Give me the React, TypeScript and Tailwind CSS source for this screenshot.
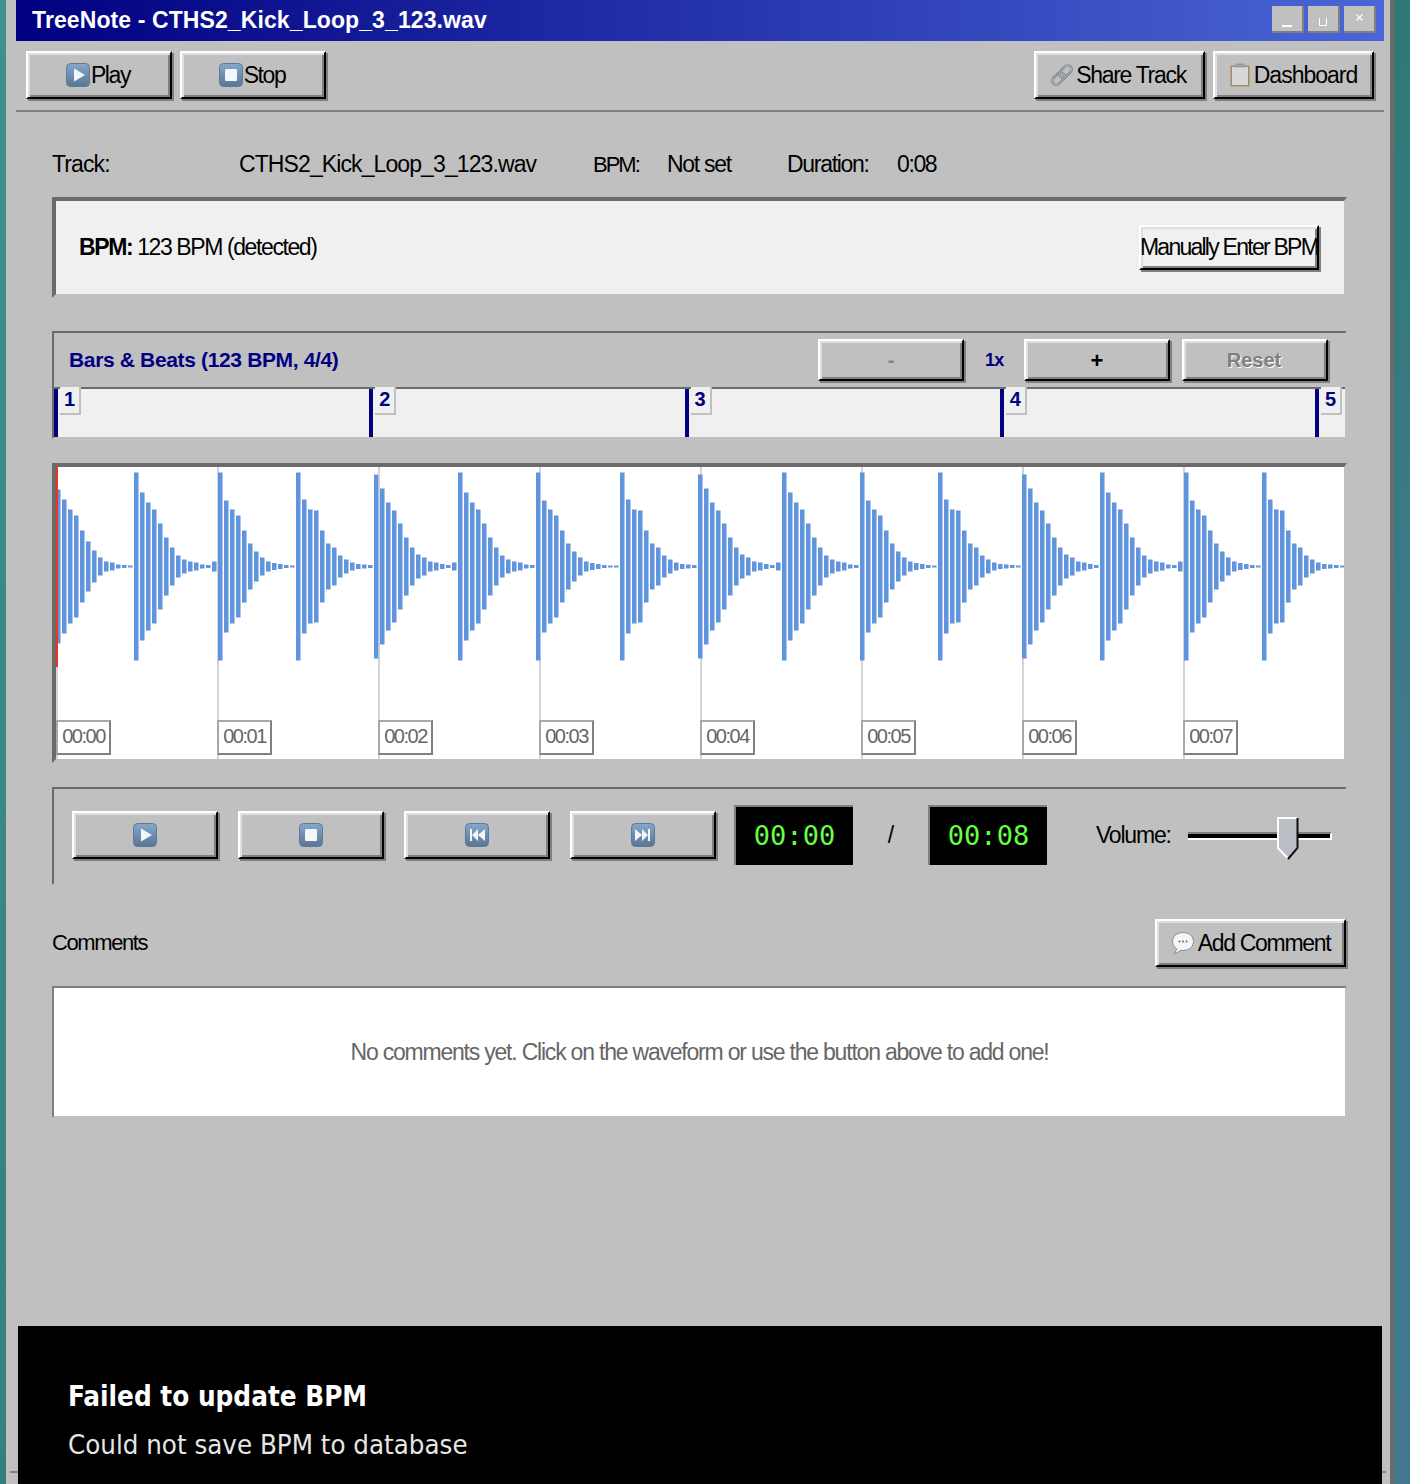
import React from "react";

const raised =
  "flex items-center justify-center border-2 border-t-white border-l-white border-r-black border-b-black bg-[#c0c0c0] shadow-[inset_2px_2px_0_#dfdfdf,inset_-2px_-2px_0_#808080,2px_2px_0_#808080]";
const ui = "font-['Liberation_Sans',Arial,sans-serif] text-[23px] tracking-[-0.9px] text-black";
const tight = "font-['Liberation_Sans',Arial,sans-serif] text-[22px] tracking-[-1.3px] text-black";

type IconKind = "play" | "stop" | "prev" | "next";

function MediaIcon({ kind, id }: { kind: IconKind; id: string }) {
  return (
    <svg width="24" height="24" viewBox="0 0 24 24" className="shrink-0">
      <defs>
        <linearGradient id={id} x1="0" y1="0" x2="0" y2="1">
          <stop offset="0" stopColor="#86a8cc" />
          <stop offset="1" stopColor="#587594" />
        </linearGradient>
      </defs>
      <rect x="0.5" y="0.5" width="23" height="23" rx="4" fill={`url(#${id})`} stroke="#5f7a96" />
      {kind === "play" && <path d="M8 5.5 L19 12 L8 18.5 Z" fill="#f2f6fb" />}
      {kind === "stop" && <rect x="6" y="6" width="12" height="12" rx="1" fill="#f2f6fb" />}
      {kind === "prev" && <path d="M5 6h2v12H5z M13 6v12l-6-6z M20 6v12l-7-6z" fill="#f2f6fb" />}
      {kind === "next" && <path d="M17 6h2v12h-2z M11 6v12l6-6z M4 6v12l7-6z" fill="#f2f6fb" />}
    </svg>
  );
}

function LinkIcon() {
  return (
    <svg width="24" height="24" viewBox="0 0 24 24" className="shrink-0" fill="none">
      <g transform="rotate(-45 12 12)">
        <rect x="0" y="8" width="14" height="8" rx="4" stroke="#6f7a85" strokeWidth="2.4" />
        <rect x="0" y="8" width="14" height="8" rx="4" stroke="#cfd4d9" strokeWidth="0.8" />
        <rect x="10" y="8" width="14" height="8" rx="4" stroke="#6f7a85" strokeWidth="2.4" />
        <rect x="10" y="8" width="14" height="8" rx="4" stroke="#cfd4d9" strokeWidth="0.8" />
      </g>
    </svg>
  );
}

function ClipboardIcon() {
  return (
    <svg width="20" height="24" viewBox="0 0 20 24" className="shrink-0">
      <rect x="0.5" y="2.5" width="19" height="21" rx="1" fill="#a98a60" />
      <rect x="2" y="4" width="16" height="18" fill="#d8d8d8" />
      <rect x="5" y="0.5" width="10" height="4" rx="1" fill="#9aa0a5" />
    </svg>
  );
}

function BubbleIcon() {
  return (
    <svg width="24" height="24" viewBox="0 0 24 24" className="shrink-0">
      <path d="M12 1.5C5.8 1.5 1.5 5.6 1.5 10.5c0 3.2 1.6 5.6 4.2 7.2L3.5 23l6.5-3.6c.7.1 1.3.1 2 .1 6.2 0 10.5-4 10.5-9S18.2 1.5 12 1.5z" fill="#f4f5f6" stroke="#888e94" />
      <circle cx="8.5" cy="10.5" r="1" fill="#666" />
      <circle cx="12" cy="10.5" r="1" fill="#666" />
      <circle cx="15.5" cy="10.5" r="1" fill="#666" />
    </svg>
  );
}

const patterns = [
  [77, 67, 57, 51, 36, 25, 16, 9, 5, 4, 2, 1.5, 1],
  [94, 74, 64, 57, 43, 29, 19, 11, 7, 5, 4, 2, 1.5, 5],
  [94, 66, 57, 51, 36, 23, 15, 9, 5, 3.5, 2.5, 1.5, 1],
  [94, 67, 57, 56, 36, 23, 19, 11, 7, 4, 2.5, 2, 1.5],
  [92, 78, 64, 56, 43, 29, 19, 12, 9, 5, 4, 2.5, 1.5, 4],
];
const starts = [0, 13, 27, 40, 53, 67, 80, 94, 107, 121, 134, 147, 161, 174, 188, 201];

function amplitudes(): number[] {
  const out: number[] = [];
  starts.forEach((s, g) => {
    const next = g + 1 < starts.length ? starts[g + 1] : 215;
    const p = g === 0 ? patterns[0] : patterns[((g - 1) % 4) + 1];
    for (let i = 0; i < next - s; i++) out.push(p[i] ?? 1);
  });
  return out;
}

function Waveform() {
  return (
    <svg width="1288" height="210" viewBox="0 0 1288 210" className="absolute left-0 top-0">
      {amplitudes().map((a, i) => (
        <g key={i}>
          <rect x={i * 6} y={99.5 - a} width="4" height={a * 2} fill="#6094dc" />
          <rect x={i * 6 + 4} y={99.5 - a} width="1" height={a * 2} fill="#a8c4ec" />
        </g>
      ))}
      <rect x="0" y="0" width="2" height="200" fill="#ee3322" />
    </svg>
  );
}

const times = ["00:00", "00:01", "00:02", "00:03", "00:04", "00:05", "00:06", "00:07"];

function Panel({ children, className }: { children: React.ReactNode; className: string }) {
  return <div className={"border-2 border-t-[#6b6b6b] border-l-[#6b6b6b] border-r-[#c0c0c0] border-b-[#c0c0c0] " + className}>{children}</div>;
}

export default function App() {
  return (
    <div className="flex h-[1484px] w-[1410px] overflow-hidden">
      <div className="w-[6px] bg-[linear-gradient(to_bottom,#3f9090,#35807a)]" />
      <div className="relative flex w-[1388px] flex-col border-r-4 border-r-[#6b6b6b] bg-[#c0c0c0]">
        <div className="ml-[10px] mr-[6px] flex h-[41px] items-center justify-between bg-[linear-gradient(to_right,#000080,#4a66d6)] pl-[16px] pr-[8px]">
          <span className="font-['Liberation_Sans',Arial,sans-serif] text-[23px] font-bold tracking-[0.1px] text-white">TreeNote - CTHS2_Kick_Loop_3_123.wav</span>
          <div className="mt-[-2px] flex gap-[4px]">
            <div className="flex h-[27px] w-[32px] items-end justify-center border-r-2 border-b-2 border-r-[#808080] border-b-[#808080] bg-[#c0c0c0] pb-[4px]">
              <svg width="10" height="2" viewBox="0 0 10 2"><rect width="10" height="2" fill="#fff" /></svg>
            </div>
            <div className="flex h-[27px] w-[32px] items-end justify-center border-r-2 border-b-2 border-r-[#808080] border-b-[#808080] bg-[#c0c0c0] pb-[5px]">
              <svg width="8" height="8" viewBox="0 0 8 8"><path d="M.5 0V7.5H7.5V0" fill="none" stroke="#fff" /></svg>
            </div>
            <div className="flex h-[27px] w-[32px] items-center justify-center border-r-2 border-b-2 border-r-[#808080] border-b-[#808080] bg-[#c0c0c0] pb-[3px]">
              <svg width="7" height="7" viewBox="0 0 7 7"><path d="M.5.5L6.5 6.5M6.5.5L.5 6.5" stroke="#fff" strokeWidth="1.2" /></svg>
            </div>
          </div>
        </div>

        <div className="ml-[10px] mr-[6px] flex h-[71px] items-start justify-between border-b-2 border-b-[#808080] pl-[10px] pr-[10px] pt-[10px]">
          <div className="flex gap-[8px]">
            <div className={`${raised} ${ui} h-[48px] w-[146px] pr-[2px] tracking-[-1.4px]`}><MediaIcon kind="play" id="i1" /><span className="ml-[1px]">Play</span></div>
            <div className={`${raised} ${ui} h-[48px] w-[146px] pr-[2px] tracking-[-1.4px]`}><MediaIcon kind="stop" id="i2" /><span className="ml-[1px]">Stop</span></div>
          </div>
          <div className="flex gap-[8px]">
            <div className={`${raised} ${ui} h-[48px] w-[171px] gap-[2px] pr-[3px] tracking-[-1.3px]`}><LinkIcon /><span>Share Track</span></div>
            <div className={`${raised} ${ui} h-[48px] w-[161px] gap-[4px] tracking-[-1px]`}><ClipboardIcon /><span>Dashboard</span></div>
          </div>
        </div>

        <div className="flex flex-col pl-[46px] pr-[43px]">
          <div className={`${ui} flex h-[85px] items-center pt-[19px]`}>
            <span className="w-[187px]">Track:</span>
            <span className="w-[354px]">CTHS2_Kick_Loop_3_123.wav</span>
            <span className="w-[74px] text-[22px] tracking-[-2px]">BPM:</span>
            <span className="w-[120px] tracking-[-1.3px]">Not set</span>
            <span className="w-[110px] tracking-[-1.3px]">Duration:</span>
            <span className="tracking-[-1.4px]">0:08</span>
          </div>

          <div className="flex h-[101px] items-center justify-between border-4 border-r-[3px] border-t-[#6b6b6b] border-l-[#6b6b6b] border-r-[#c0c0c0] border-b-[#c0c0c0] bg-[#f0f0f0] pl-[23px] pr-[25px]">
            <span className={`${ui} tracking-[-1.4px]`}><b>BPM:</b> 123 BPM (detected)</span>
            <div className={`${raised} ${ui} h-[45px] w-[180px] whitespace-nowrap bg-[#f0f0f0] tracking-[-1.75px] shadow-[inset_-2px_-2px_0_#808080,inset_2px_2px_0_#e0e0e0]`}>Manually Enter BPM</div>
          </div>

          <Panel className="mt-[33px] flex h-[108px] flex-col">
            <div className="flex h-[54px] items-center pl-[15px]">
              <span className="w-[749px] pb-[1px] font-['Liberation_Sans',Arial,sans-serif] text-[21px] font-bold tracking-[-0.35px] text-[#000080]">Bars &amp; Beats (123 BPM, 4/4)</span>
              <div className={`${raised} h-[42px] w-[146px] font-['Liberation_Sans',Arial,sans-serif] text-[20px] font-bold text-[#808080]`}>-</div>
              <span className="w-[60px] pl-[21px] font-['Liberation_Sans',Arial,sans-serif] text-[18px] font-bold tracking-[-0.7px] text-[#000080]">1x</span>
              <div className={`${raised} h-[42px] w-[146px] font-['Liberation_Sans',Arial,sans-serif] text-[22px] font-bold`}>+</div>
              <div className={`${raised} ml-[12px] h-[42px] w-[146px] pr-[2px] font-['Liberation_Sans',Arial,sans-serif] text-[20px] font-bold text-[#808080] [text-shadow:1px_1px_0_#fff]`}>Reset</div>
            </div>
            <div className="relative flex h-[50px] border-t-2 border-t-[#6b6b6b] bg-[#f0f0f0]">
              {[1, 2, 3, 4, 5].map((n, i) => (
                <div key={n} className={`relative h-full border-l-4 border-l-[#000080] ${i === 4 ? "w-[30px]" : "w-[315.3px]"}`}>
                  <div className="absolute left-[2px] top-[-2px] flex h-[28px] w-[21px] items-center justify-center border-r-2 border-b-2 border-r-[#c0c0c0] border-b-[#c0c0c0] bg-[#f0f0f0] pb-[2px] font-['Liberation_Sans',Arial,sans-serif] text-[20px] font-bold text-[#000080]">{n}</div>
                </div>
              ))}
            </div>
          </Panel>

          <div className="mt-[24px] h-[300px] border-4 border-r-[3px] border-t-[#6b6b6b] border-l-[#6b6b6b] border-r-[#c0c0c0] border-b-[#c0c0c0] bg-white">
            <div className="relative flex h-full">
              {times.map((t) => (
                <div key={t} className="relative h-full w-[161px] shrink-0 border-l-2 border-l-[#d4d4d4]">
                  <div className="absolute left-[-2px] top-[253px] flex h-[35px] w-[55px] items-center justify-center border-2 border-t-[#a8a8a8] border-l-[#a8a8a8] border-r-[#808080] border-b-[#808080] bg-white pb-[3px] font-['Liberation_Sans',Arial,sans-serif] text-[20px] tracking-[-1.5px] text-[#666]">{t}</div>
                </div>
              ))}
              <Waveform />
            </div>
          </div>

          <Panel className="mt-[24px] flex h-[98px] items-center pb-[24px] pl-[18px] pr-[14px] pt-[22px]">
            <div className="flex gap-[20px]">
              {(["play", "stop", "prev", "next"] as IconKind[]).map((k) => (
                <div key={k} className={`${raised} h-[48px] w-[146px]`}><MediaIcon kind={k} id={`t${k}`} /></div>
              ))}
            </div>
            <div className="ml-[18px] flex h-[60px] w-[119px] shrink-0 items-center justify-center border-t-2 border-l-2 border-t-[#808080] border-l-[#808080] bg-black font-['DejaVu_Sans_Mono',monospace] text-[27px] text-[#66ff44]">00:00</div>
            <span className={`${ui} flex w-[75px] shrink-0 justify-center`}>/</span>
            <div className="flex h-[60px] w-[119px] shrink-0 items-center justify-center border-t-2 border-l-2 border-t-[#808080] border-l-[#808080] bg-black font-['DejaVu_Sans_Mono',monospace] text-[27px] text-[#66ff44]">00:08</div>
            <span className={`${ui} ml-[49px] w-[92px] shrink-0 tracking-[-1.2px]`}>Volume:</span>
            <div className="relative h-[44px] w-[144px] shrink-0">
              <div className="absolute left-0 right-0 top-[19px] h-[8px] border-t-2 border-b-2 border-r-2 border-t-[#808080] border-b-white border-r-white bg-black" />
              <svg width="22" height="43" viewBox="0 0 22 43" className="absolute left-[89px] top-[4px]">
                <path d="M1 1H20V31L11 42L1 31Z" fill="#b8bec4" />
                <path d="M10.5 41L1 31V1H20" fill="none" stroke="#fff" strokeWidth="2" />
                <path d="M20.5 1V31L11 42" fill="none" stroke="#111" strokeWidth="2" />
              </svg>
            </div>
          </Panel>

          <div className="mt-[33px] flex h-[50px] items-center justify-between">
            <span className={`${tight} pb-[2px] tracking-[-1.4px]`}>Comments</span>
            <div className={`${raised} ${ui} mr-[1px] h-[48px] w-[191px] gap-[3px] tracking-[-1.3px]`}><BubbleIcon /><span>Add Comment</span></div>
          </div>

          <div className="mt-[18px] flex h-[132px] items-center justify-center border-2 border-t-[#808080] border-l-[#808080] border-r-[#c0c0c0] border-b-[#c0c0c0] bg-white font-['Liberation_Sans',Arial,sans-serif] text-[23px] tracking-[-1.21px] text-[#666]">
            No comments yet. Click on the waveform or use the button above to add one!
          </div>
        </div>

        <div className="mx-[4px] mb-[11px] mt-auto h-[2px] bg-[#808080]" />

        <div className="absolute bottom-0 left-[12px] right-[8px] top-[1326px] bg-black pl-[50px] pt-[54px] font-['DejaVu_Sans',sans-serif] [font-stretch:condensed] text-white">
          <div className="text-[27.6px] font-bold leading-[34px]">Failed to update BPM</div>
          <div className="mt-[14px] text-[27.4px] leading-[34px] text-[#e6e6e6]">Could not save BPM to database</div>
        </div>
      </div>
      <div className="w-[16px] bg-[linear-gradient(to_bottom,#2f7a74,#3f7a8f_55%,#41788f)]" />
    </div>
  );
}
